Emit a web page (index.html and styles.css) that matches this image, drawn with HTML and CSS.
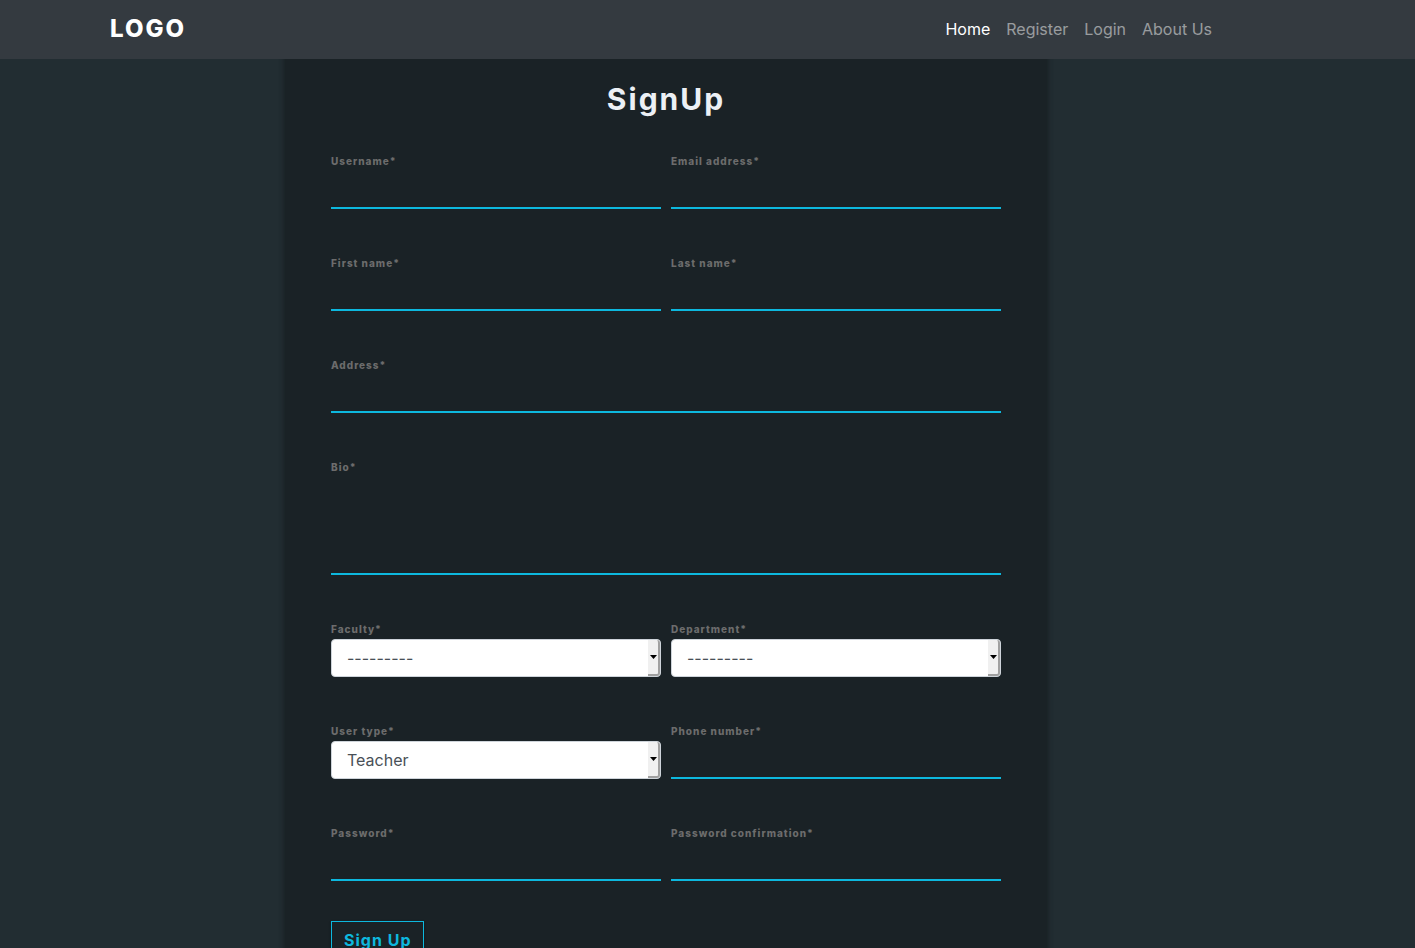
FILE: index.html
```html
<!DOCTYPE html>
<html lang="en">
<head>
<meta charset="utf-8">
<meta name="viewport" content="width=device-width, initial-scale=1">
<title>SignUp</title>
<link rel="stylesheet" href="styles.css">
</head>
<body>
<header class="navbar">
  <a class="brand" href="#">LOGO</a>
  <nav class="nav-links">
    <a class="nav-link active" href="#">Home</a>
    <a class="nav-link" href="#">Register</a>
    <a class="nav-link" href="#">Login</a>
    <a class="nav-link" href="#">About Us</a>
  </nav>
</header>
<main class="container">
  <section class="card">
    <h1 class="title">SignUp</h1>
    <form class="form">
      <div class="group"><label for="username">Username*</label><input class="field" id="username" type="text"></div>
      <div class="group"><label for="email">Email address*</label><input class="field" id="email" type="email"></div>
      <div class="group"><label for="first">First name*</label><input class="field" id="first" type="text"></div>
      <div class="group"><label for="last">Last name*</label><input class="field" id="last" type="text"></div>
      <div class="group wide"><label for="address">Address*</label><input class="field" id="address" type="text"></div>
      <div class="group wide"><label for="bio">Bio*</label><textarea class="field bio" id="bio"></textarea></div>
      <div class="group"><label for="faculty">Faculty*</label>
        <div class="select-box"><select id="faculty"><option>---------</option></select><span class="arrow"><svg width="7" height="4" viewBox="0 0 7 4"><path d="M0 0h7L3.500 4z"/></svg></span></div></div>
      <div class="group"><label for="department">Department*</label>
        <div class="select-box"><select id="department"><option>---------</option></select><span class="arrow"><svg width="7" height="4" viewBox="0 0 7 4"><path d="M0 0h7L3.500 4z"/></svg></span></div></div>
      <div class="group"><label for="usertype">User type*</label>
        <div class="select-box"><select id="usertype"><option>Teacher</option></select><span class="arrow"><svg width="7" height="4" viewBox="0 0 7 4"><path d="M0 0h7L3.500 4z"/></svg></span></div></div>
      <div class="group"><label for="phone">Phone number*</label><input class="field" id="phone" type="tel"></div>
      <div class="group"><label for="password">Password*</label><input class="field" id="password" type="password"></div>
      <div class="group"><label for="confirm">Password confirmation*</label><input class="field" id="confirm" type="password"></div>
      <div class="actions wide"><button class="submit" type="submit">Sign Up</button></div>
    </form>
  </section>
</main>
</body>
</html>
```
FILE: styles.css
```css
* { box-sizing: border-box; }

body {
  margin: 0;
  min-height: 100vh;
  background: #222d32;
  font-family: Inter, "Open Sans", sans-serif;
  font-size: 16px;
  line-height: 24px;
}

.navbar {
  position: relative;
  display: flex;
  align-items: center;
  justify-content: space-between;
  min-height: 59px;
  padding: 0 203px 2px 110px;
  background: #343a40;
}

.brand {
  color: #fff;
  font-size: 24px;
  font-weight: 800;
  letter-spacing: 2px;
  text-decoration: none;
}

.nav-links { display: flex; gap: 16px; }

.nav-link {
  color: rgba(255, 255, 255, 0.5);
  font-weight: 400;
  text-decoration: none;
}

.nav-link.active { color: #fff; }

.container {
  max-width: 1141px;
  margin: 0 auto;
  padding-left: 148px;
}

/* The card starts behind the navbar, which hides its top shadow. */
.card {
  max-width: 762px;
  margin-top: -10px;
  padding: 30px 46px 36px;
  background: #1a2226;
  box-shadow: 0 3px 6px rgba(0, 0, 0, 0.16), 0 3px 6px rgba(0, 0, 0, 0.23);
}

.title {
  margin: 0 0 34px;
  color: #ecf0f5;
  font-size: 30px;
  font-weight: 700;
  line-height: 40px;
  letter-spacing: 2px;
  text-align: center;
}

.form {
  display: grid;
  grid-template-columns: 1fr 1fr;
  column-gap: 10px;
}

.wide { grid-column: 1 / -1; }

.group {
  display: flex;
  flex-direction: column;
  margin-bottom: 46px;
}

.group label {
  height: 18px;
  color: #6c6c6c;
  font-size: 10px;
  font-weight: 800;
  line-height: 16px;
  letter-spacing: 1px;
}

.field {
  width: 100%;
  height: 38px;
  padding: 6px 0;
  border: 0;
  border-bottom: 2px solid #0db8de;
  border-radius: 0;
  outline: 0;
  background: transparent;
  color: #ecf0f5;
  font: inherit;
}

.bio { height: 98px; resize: none; }

.select-box { position: relative; }

.select-box select {
  display: block;
  width: 100%;
  height: 38px;
  padding: 0 28px 0 15px;
  border: 1px solid #ced4da;
  border-radius: 4px;
  appearance: none;
  background: #fff;
  color: #495057;
  font: inherit;
}

.arrow {
  position: absolute;
  top: 1px;
  right: 1px;
  bottom: 1px;
  display: flex;
  align-items: center;
  justify-content: center;
  width: 12px;
  border-right: 2px solid #a0a0a0;
  border-bottom: 2px solid #a0a0a0;
  border-radius: 0 3px 3px 0;
  background: #f0f0f0;
  pointer-events: none;
}

.actions { margin-top: -6px; }

.submit {
  height: 38px;
  padding: 0 12px;
  border: 1px solid #0db8de;
  border-radius: 0;
  background: transparent;
  color: #0db8de;
  font: inherit;
  font-weight: 700;
  letter-spacing: 1px;
  box-shadow: 0 1px 3px rgba(0, 0, 0, 0.12), 0 1px 2px rgba(0, 0, 0, 0.24);
}
```
